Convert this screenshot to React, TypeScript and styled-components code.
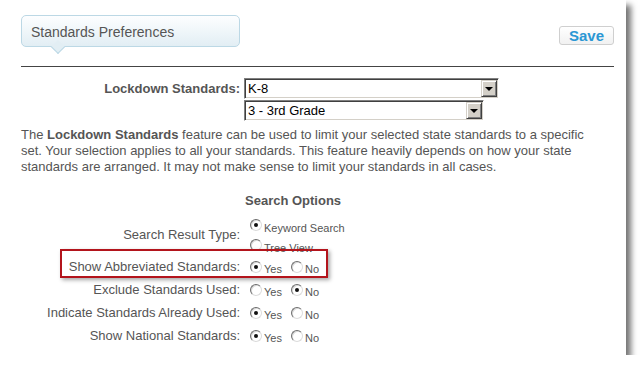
import styled, { createGlobalStyle } from 'styled-components';

const GlobalStyle = createGlobalStyle`
  html, body {
    margin: 0;
    padding: 0;
    background: #fff;
  }
  body {
    font-family: "Liberation Sans", Arial, sans-serif;
  }
`;

const Panel = styled.div`
  width: 626px;
  height: 355px;
  box-sizing: border-box;
  padding: 15px 12px 0 21px;
  background: #fff;
  box-shadow: 5px 5px 6px rgba(0, 0, 0, 0.55);
  color: #555;
  font-size: 13px;
`;

const Header = styled.div`
  display: flex;
  justify-content: space-between;
  align-items: flex-start;
  height: 51px;
  border-bottom: 1px solid #444;
`;

const Tab = styled.div`
  position: relative;
  width: 219px;
  height: 32px;
  box-sizing: border-box;
  padding: 2px 0 0 9px;
  border: 1px solid #bcd8e5;
  border-radius: 5px;
  background: linear-gradient(#fdfeff, #e2eef4);
  font-size: 14px;
  line-height: 28px;
  color: #555;

  &::after {
    content: '';
    position: absolute;
    left: 31px;
    bottom: -6px;
    width: 9px;
    height: 9px;
    background: #e2eef4;
    border-right: 1px solid #bcd8e5;
    border-bottom: 1px solid #bcd8e5;
    transform: rotate(45deg);
  }
`;

const SaveButton = styled.button`
  margin-top: 11px;
  width: 55px;
  height: 19px;
  padding: 0;
  border: 1px solid #cfcfcf;
  border-radius: 3px;
  background: linear-gradient(#ffffff, #f1f1f1);
  font-family: inherit;
  font-size: 15px;
  font-weight: bold;
  line-height: 17px;
  color: #2b97d4;
`;

const FieldRow = styled.div`
  display: flex;
  align-items: flex-start;
  margin-top: 11px;
`;

const FieldLabel = styled.div`
  width: 219px;
  text-align: right;
  font-weight: bold;
  line-height: 20px;
  padding-top: 1px;
`;

const SelectStack = styled.div`
  display: flex;
  flex-direction: column;
  gap: 1px;
  margin-left: 4px;
`;

const Select = styled.div<{ $width: number }>`
  display: flex;
  align-items: center;
  justify-content: space-between;
  width: ${(p) => p.$width}px;
  height: 21px;
  box-sizing: border-box;
  border: 1px solid;
  border-color: #808080 #fff #fff #808080;
  box-shadow: inset 1px 1px 0 #404040, inset -1px -1px 0 #d4d0c8;
  background: #fff;
  padding: 1px 1px 1px 3px;
  color: #000;
  font-size: 13px;
`;

const Arrow = styled.span`
  display: flex;
  align-items: center;
  justify-content: center;
  width: 16px;
  height: 17px;
  box-sizing: border-box;
  background: #d4d0c8;
  border: 1px solid;
  border-color: #d4d0c8 #404040 #404040 #d4d0c8;
  box-shadow: inset 1px 1px 0 #fff, inset -1px -1px 0 #808080;

  &::before {
    content: '';
    border-left: 4px solid transparent;
    border-right: 4px solid transparent;
    border-top: 4px solid #000;
  }
`;

const Description = styled.p`
  margin: 6px 0 0;
  max-width: 578px;
  line-height: 16px;
`;

const Bold = styled.b`
  font-weight: bold;
`;

const SectionTitle = styled.div`
  margin: 18px 0 0 224px;
  font-weight: bold;
  line-height: 16px;
`;

const OptionRow = styled.div<{ $highlight?: boolean; $height?: number }>`
  position: relative;
  display: flex;
  align-items: center;
  height: ${(p) => p.$height ?? 23}px;
  margin-top: ${(p) => (p.$height ? 6 : 0)}px;

  &::after {
    content: '';
    display: ${(p) => (p.$highlight ? 'block' : 'none')};
    position: absolute;
    left: 39px;
    top: -6px;
    width: 268px;
    height: 29px;
    box-sizing: border-box;
    border: 2px solid #b3141c;
    box-shadow: 2px 2px 4px rgba(0, 0, 0, 0.35);
    pointer-events: none;
  }
`;

const OptionLabel = styled.div`
  width: 219px;
  text-align: right;
  line-height: 16px;
`;

const Choices = styled.div<{ $stacked?: boolean }>`
  display: flex;
  flex-direction: ${(p) => (p.$stacked ? 'column' : 'row')};
  gap: ${(p) => (p.$stacked ? 0 : 9)}px;
  margin-left: 10px;
`;

const Choice = styled.label<{ $stacked?: boolean }>`
  display: flex;
  align-items: center;
  height: ${(p) => (p.$stacked ? 20 : 19)}px;
  gap: 2px;
  font-size: 11px;
  color: #555;
`;

const ChoiceText = styled.span`
  padding-top: 6px;
  line-height: 13px;
`;

const Radio = styled.span<{ $checked?: boolean }>`
  display: flex;
  align-items: center;
  justify-content: center;
  width: 12px;
  height: 12px;
  box-sizing: border-box;
  border-radius: 50%;
  border: 1px solid;
  border-color: #6e6e6e #dcdcdc #dcdcdc #6e6e6e;
  box-shadow: inset 1px 1px 0 rgba(0, 0, 0, 0.15);
  background: #fff;

  &::before {
    content: '';
    display: ${(p) => (p.$checked ? 'block' : 'none')};
    width: 4px;
    height: 4px;
    border-radius: 50%;
    background: #111;
  }
`;

type Opt = { label: string; checked?: boolean };

const RadioGroup = ({ options, stacked }: { options: Opt[]; stacked?: boolean }) => (
  <Choices $stacked={stacked}>
    {options.map((o) => (
      <Choice key={o.label} $stacked={stacked}>
        <Radio $checked={o.checked} />
        <ChoiceText>{o.label}</ChoiceText>
      </Choice>
    ))}
  </Choices>
);

const yesNo = (yes: boolean): Opt[] => [
  { label: 'Yes', checked: yes },
  { label: 'No', checked: !yes },
];

export default function App() {
  return (
    <>
      <GlobalStyle />
      <Panel>
        <Header>
          <Tab>Standards Preferences</Tab>
          <SaveButton>Save</SaveButton>
        </Header>

        <FieldRow>
          <FieldLabel>Lockdown Standards:</FieldLabel>
          <SelectStack>
            <Select $width={255}>
              K-8
              <Arrow />
            </Select>
            <Select $width={240}>
              3 - 3rd Grade
              <Arrow />
            </Select>
          </SelectStack>
        </FieldRow>

        <Description>
          The <Bold>Lockdown Standards</Bold> feature can be used to limit your selected state
          standards to a specific set. Your selection applies to all your standards. This feature
          heavily depends on how your state standards are arranged. It may not make sense to limit
          your standards in all cases.
        </Description>

        <SectionTitle>Search Options</SectionTitle>

        <OptionRow $height={40}>
          <OptionLabel>Search Result Type:</OptionLabel>
          <RadioGroup
            stacked
            options={[{ label: 'Keyword Search', checked: true }, { label: 'Tree View' }]}
          />
        </OptionRow>
        <OptionRow $highlight>
          <OptionLabel>Show Abbreviated Standards:</OptionLabel>
          <RadioGroup options={yesNo(true)} />
        </OptionRow>
        <OptionRow>
          <OptionLabel>Exclude Standards Used:</OptionLabel>
          <RadioGroup options={yesNo(false)} />
        </OptionRow>
        <OptionRow>
          <OptionLabel>Indicate Standards Already Used:</OptionLabel>
          <RadioGroup options={yesNo(true)} />
        </OptionRow>
        <OptionRow>
          <OptionLabel>Show National Standards:</OptionLabel>
          <RadioGroup options={yesNo(true)} />
        </OptionRow>
      </Panel>
    </>
  );
}
